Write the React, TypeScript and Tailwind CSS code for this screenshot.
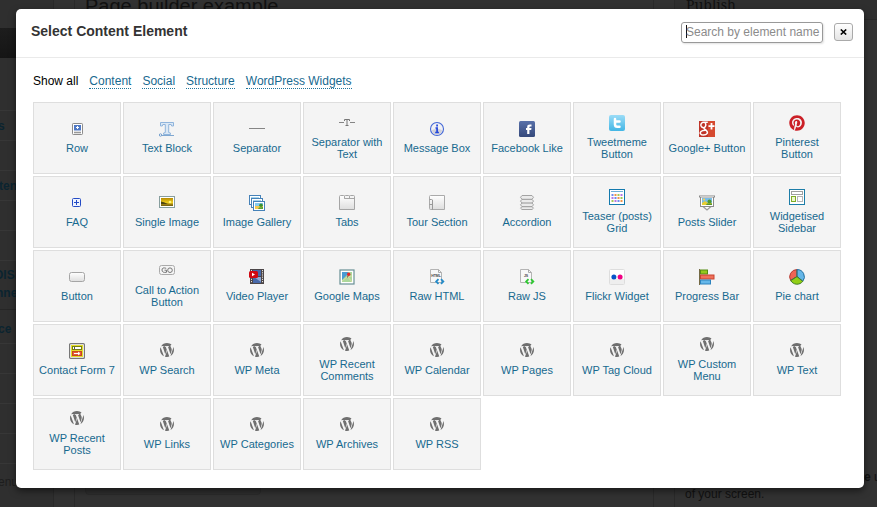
import type { ReactNode } from "react";
import { FaPinterest } from "react-icons/fa";

function Icon({ children }: { children: ReactNode }) {
  return (
    <svg width="16" height="16" viewBox="0 0 16 16" fill="none" className="block">
      {children}
    </svg>
  );
}

function WordPressMark() {
  return (
    <svg width="14" height="14" viewBox="43 43 426 426" fill="#6f6f6f" className="mb-0.5 block">
      <path d="M61.7 169.4l101.5 278C92.2 413 43.3 340.2 43.3 256c0-30.9 6.6-60.1 18.4-86.6zm337.9 75.900c0-26.300-9.400-44.500-17.500-58.700-10.800-17.500-20.900-32.400-20.900-49.900 0-19.600 14.800-37.800 35.700-37.800.9 0 1.800.1 2.800.2-37.900-34.700-88.300-55.900-143.700-55.900-74.300 0-139.700 38.100-177.800 95.900 5 .2 9.700.3 13.700.3 22.200 0 56.700-2.700 56.700-2.700 11.500-.7 12.800 16.200 1.400 17.500 0 0-11.500 1.300-24.300 2l77.500 230.400L249.800 247l-33.100-90.800c-11.500-.7-22.300-2-22.300-2-11.500-.7-10.100-18.200 1.300-17.500 0 0 35.100 2.700 56 2.700 22.200 0 56.700-2.700 56.700-2.700 11.500-.7 12.800 16.200 1.400 17.500 0 0-11.500 1.300-24.300 2l76.900 228.700 21.200-70.900c9-29.400 16-50.500 16-68.700zm-139.900 29.300l-63.800 185.500c19.100 5.600 39.200 8.700 60.100 8.700 24.800 0 48.500-4.300 70.600-12.100-.6-.9-1.100-1.900-1.500-2.900l-65.400-179.200zm183-120.700c.9 6.800 1.400 14 1.400 21.900 0 21.600-4 45.800-16.200 76.200l-65 187.900C426.200 403 468.700 334.500 468.700 256c0-37-9.400-71.800-26-102.100z" />
    </svg>
  );
}

const icons: Record<string, ReactNode> = {
  row: (
    <Icon>
      <rect x="3.5" y="2.5" width="10" height="11" rx="0.8" fill="#fff" stroke="#8b8b8b" />
      <rect x="5" y="4" width="7" height="5.5" fill="#4f78c4" />
      <path d="M7 6.5h3M8.5 5v3" stroke="#fff" />
      <path d="M5 11.5h7" stroke="#999" strokeWidth="1.6" />
    </Icon>
  ),
  text: (
    <Icon>
      <path
        d="M1.5 5V1.500h13V5h-1.800l-.5-1.500H9.700v8l1.800.6v1.400H4.500v-1.400l1.800-.6v-8H3.800L3.300 5z"
        fill="#dbe8f5"
        stroke="#8fb4dc"
      />
      <path d="M3 14.500h12" stroke="#7fa7d0" />
      <circle cx="1.500" cy="14" r="1.200" fill="#fff" stroke="#6f9bcb" />
    </Icon>
  ),
  separator: (
    <Icon>
      <path d="M0 7.500h16" stroke="#858585" />
    </Icon>
  ),
  separatorText: (
    <Icon>
      <path d="M0 7.500h5M11 7.500h5" stroke="#858585" />
      <path d="M5.500 6V4.500h5V6M8 4.500v6M6.500 10.500h3" stroke="#777" />
    </Icon>
  ),
  info: (
    <Icon>
      <circle cx="8" cy="8" r="6.500" fill="#f1f1f4" stroke="#4468d6" strokeWidth="1.100" />
      <path d="M3 9a5 5 0 0 0 10 0Q8 7 3 9z" fill="#d1d1d9" />
      <path d="M8.100 3.500v2M6.500 7h1.600v4.500M6.200 11.500h3.700" stroke="#2146dc" strokeWidth="1.700" />
    </Icon>
  ),
  facebook: (
    <Icon>
      <defs>
        <linearGradient id="fb" x2="0" y2="1">
          <stop stopColor="#5870a9" />
          <stop offset="1" stopColor="#35497b" />
        </linearGradient>
      </defs>
      <rect width="16" height="16" rx="1.500" fill="url(#fb)" />
      <path d="M8.200 13V9H7V7h1.200V5.800C8.200 4.200 9.200 3.500 11 3.500h1.500v2h-1.200c-.6 0-.9.2-.9.800V7h2.100l-.3 2h-1.800v4z" fill="#fff" />
    </Icon>
  ),
  twitter: (
    <Icon>
      <defs>
        <linearGradient id="tw" x2="0" y2="1">
          <stop stopColor="#9bdcf7" />
          <stop offset="1" stopColor="#43b6e5" />
        </linearGradient>
      </defs>
      <rect width="16" height="16" rx="2" fill="url(#tw)" />
      <path d="M6 4v5.500q0 2.300 2.300 2.300H10.500M6 6.500h4.500" stroke="#fff" strokeWidth="2.500" strokeLinecap="round" />
    </Icon>
  ),
  google: (
    <Icon>
      <path d="M0 0h9v16H0z" fill="#bf3428" />
      <path d="M9 0h7v16H9z" fill="#d5492f" />
      <path d="M8.800 1.300H4.800C2.500 1.300 1.700 3 1.900 4.500S3.800 7 5.300 6.500 7.500 3 5.900 1.800M5.300 6.700c-.8 1 .6 1.400 1.700 2.400 3 2.900.6 5-2.500 5-3 0-4-2.100-2.500-3.600C3 9.500 4.600 9.400 6.500 9.300" stroke="#fff" strokeWidth="1.500" />
      <path d="M12.500 2v6.500M9.500 5.200h6" stroke="#fff" strokeWidth="1.800" />
    </Icon>
  ),
  pinterest: <FaPinterest size={16} color="#cb2027" />,
  faq: (
    <Icon>
      <rect x="3.500" y="3.500" width="8" height="8" rx="1" fill="#eef3ff" stroke="#244bc5" />
      <path d="M5 7.500h5M7.500 5v5" stroke="#244bc5" />
    </Icon>
  ),
  image: (
    <Icon>
      <defs>
        <linearGradient id="sunset" x2="0" y2="1">
          <stop stopColor="#b78a00" />
          <stop offset=".6" stopColor="#f0d020" />
          <stop offset=".75" stopColor="#a88a14" />
          <stop offset="1" stopColor="#6b5a12" />
        </linearGradient>
      </defs>
      <rect x=".5" y="1.500" width="15" height="11" fill="#fff" stroke="#879e9e" />
      <path d="M2 3h12v8H2z" fill="url(#sunset)" />
      <path d="M2 6.500l3 .8 4 1.700H2z" fill="#4d4512" />
      <circle cx="11" cy="7" r="1.300" fill="#fff57a" />
    </Icon>
  ),
  gallery: (
    <Icon>
      <rect x=".5" y=".5" width="11" height="9" fill="#fff" stroke="#4682b8" />
      <path d="M2 2h8v1.500H2z" fill="#a4d5ed" />
      <rect x="2.500" y="3.500" width="11" height="9" fill="#fff" stroke="#4682b8" />
      <path d="M4 5h8v1.500H4z" fill="#a4d5ed" />
      <rect x="4.500" y="6.500" width="11" height="9" fill="#fff" stroke="#4682b8" />
      <path d="M6 8h8v4H6z" fill="#83caef" />
      <path d="M6 11h8v3H6z" fill="#f3c950" />
      <path d="M10 12.500l4-.5v2H9z" fill="#57a338" />
      <circle cx="12" cy="10.300" r="1.800" fill="#39912f" />
    </Icon>
  ),
  tabs: (
    <Icon>
      <defs>
        <linearGradient id="gray" x2="0" y2="1">
          <stop stopColor="#fff" />
          <stop offset="1" stopColor="#dedede" />
        </linearGradient>
      </defs>
      <path d="M.500 14.500v-13q0-1 1-1h3q1 0 1 1V3.500h10v11z" fill="url(#gray)" stroke="#a5a5a5" />
      <path d="M5.500 3.500v-2q0-1 1-1h3q1 0 1 1v2M10.500 3.500v-2q0-1 1-1h3q1 0 1 1v3" stroke="#a5a5a5" />
    </Icon>
  ),
  tour: (
    <Icon>
      <defs>
        <linearGradient id="tourFill" x2="0" y2="1">
          <stop stopColor="#fff" />
          <stop offset="1" stopColor="#ddd" />
        </linearGradient>
      </defs>
      <path d="M1.500.500h14v14h-14q-1 0-1-1v-12q0-1 1-1z" fill="url(#tourFill)" stroke="#aaa" />
      <path d="M3.500 5v9.500M.500 4.500h2q1 0 1 1v4h-3M3.500 9.500v5" stroke="#999" />
    </Icon>
  ),
  accordion: (
    <Icon>
      <path d="M3 .500h10l1.500 1.800L13 4.300l1.500 1.800L13 8l1.500 1.800L13 11.700l1.500 1.500L13 14.500H3l-1.500-1.300L3 11.700 1.500 9.800 3 8 1.500 6.100 3 4.300 1.500 2.300z" fill="#ebebeb" stroke="#a3a3a3" />
      <path d="M3 4.300h10M3 8h10M3 11.700h10" stroke="#969696" />
    </Icon>
  ),
  grid: (
    <Icon>
      <rect x=".500" y=".500" width="15" height="15" fill="#fff" stroke="#1379ad" />
      <path d="M2 2.500h12" stroke="#6fb0d8" />
      {[5, 8, 11].map((y, r) =>
        [2, 5, 8, 11].map((x, c) => (
          <rect key={`${x}-${y}`} x={x + 0.5} y={y} width="2" height="2" fill={["#6f8cec", "#f0944a", "#a4c855", "#b977e2"][(r * 3 + c) % 4]} />
        )),
      )}
    </Icon>
  ),
  slider: (
    <Icon>
      <path d="M4 11.500l4 3.500 4-3.500" fill="#fff" stroke="#9b9b9b" strokeWidth="1.300" />
      <rect x="1.500" y="1.500" width="13" height="10" fill="#fff" stroke="#8b8b8b" />
      <path d="M3 3h10v5H3z" fill="#79bde7" />
      <path d="M3 8l3-2 3 2h4v2H3z" fill="#e7ce34" />
      <path d="M8 8.500h5v1.500H7z" fill="#59932d" />
      <circle cx="10.500" cy="6.500" r="2" fill="#4f9931" />
      <circle cx="5" cy="4.500" r="1" fill="#ffd345" />
      <path d="M0 1.500h16" stroke="#8a8a8a" strokeWidth="2" />
      <path d="M1 1.500h14" stroke="#ddd" strokeWidth=".800" />
    </Icon>
  ),
  sidebar: (
    <Icon>
      <rect x=".500" y=".500" width="15" height="15" fill="#fff" stroke="#1c7da8" />
      <rect x="2.500" y="2.500" width="11" height="3" fill="#fff" stroke="#a0a0a0" />
      <rect x="2.500" y="7.500" width="4" height="5" fill="#edf7ce" stroke="#7fac25" />
      <rect x="8.500" y="7.500" width="5" height="5" fill="#fff" stroke="#b5b5b5" />
    </Icon>
  ),
  button: (
    <Icon>
      <defs>
        <linearGradient id="buttonFill" x2="0" y2="1">
          <stop stopColor="#fff" />
          <stop offset="1" stopColor="#dedede" />
        </linearGradient>
      </defs>
      <rect x=".500" y="3.500" width="15" height="9" rx="2" fill="url(#buttonFill)" stroke="#a5a5a5" />
    </Icon>
  ),
  go: (
    <Icon>
      <rect x=".500" y="2.500" width="15" height="9" rx="2" fill="#f4f4f4" stroke="#aaa" />
      <path d="M7.200 5.300Q3 4 3 7t4.500 2.300V7.200H5.500" stroke="#777" />
      <circle cx="11" cy="7.200" r="2.300" stroke="#777" />
    </Icon>
  ),
  video: (
    <Icon>
      <path d="M1 0h14v15H1z" fill="#4c4648" />
      <path d="M4 1h8v6H4zM4 8h8v6H4z" fill="#4869aa" />
      <path d="M5 8h7v5z" fill="#8faad6" />
      <path d="M2.500 1v13M13.500 1v13" stroke="#e6e1dc" strokeDasharray="1.200 1" />
      <rect x="0" y="2" width="9" height="7" rx="1.500" fill="#cf0913" />
      <path d="M3 3.700v3.600l3-1.800z" fill="#fff" />
    </Icon>
  ),
  maps: (
    <Icon>
      <rect x="1" y="1" width="14" height="14" fill="#fff" stroke="#688f94" strokeWidth="1.200" />
      <path d="M3 3h10v10H3z" fill="#acd79b" />
      <path d="M3 3h6v2L6 8l-3 3z" fill="#4a9bd3" />
      <path d="M3 12l5-4 5-1M9 8l4 5" stroke="#e0e0a0" strokeWidth=".800" />
      <path d="M9.500 5.500l-1 3" stroke="#745" />
      <circle cx="9.700" cy="5.300" r="1.700" fill="#e42929" />
    </Icon>
  ),
  html: (
    <Icon>
      <path d="M1.500.500h8l3 3v10h-11z" fill="#f8f8f8" stroke="#b4b4b4" />
      <path d="M9.500.500v3h3" stroke="#aaa" />
      <text x="2.200" y="7.800" fontSize="3.500" fontFamily="Liberation Sans, sans-serif" fontWeight="bold" fill="#444">HTML</text>
      <path d="M9.500 10.200l-2.300 2.300 2.300 2.300M12 10.200l2.300 2.300-2.300 2.300" stroke="#248bc8" strokeWidth="1.800" />
    </Icon>
  ),
  js: (
    <Icon>
      <path d="M1.500.500h8l3 3v10h-11z" fill="#f8f8f8" stroke="#b4b4b4" />
      <path d="M9.500.500v3h3" stroke="#aaa" />
      <text x="4.900" y="8" fontSize="3.500" fontFamily="Liberation Sans, sans-serif" fontWeight="bold" fill="#444">JS</text>
      <path d="M9.500 10.200l-2.300 2.300 2.300 2.300M12 10.200l2.300 2.300-2.300 2.300" stroke="#2ec832" strokeWidth="1.800" />
    </Icon>
  ),
  flickr: (
    <Icon>
      <rect x=".500" y=".500" width="15" height="15" rx="1" fill="#fff" stroke="#ddd" />
      <path d="M1 10h14v5H1z" fill="#eee" />
      <circle cx="4.900" cy="8" r="2.500" fill="#0754c8" />
      <circle cx="11.100" cy="8" r="2.500" fill="#f10083" />
    </Icon>
  ),
  progress: (
    <Icon>
      <rect x="1.500" y="1" width="7" height="4" fill="#94c81d" stroke="#558c12" />
      <rect x="1.500" y="6" width="13.500" height="4" fill="#ef705a" stroke="#c84331" />
      <rect x="1.500" y="11" width="10" height="4" fill="#66b8ea" stroke="#2d83be" />
      <path d="M.500 0v16" stroke="#746a45" />
    </Icon>
  ),
  pie: (
    <Icon>
      <path d="M8 7.500V.600A7.200 7.200 0 0 0 1.700 11.500z" fill="#f06454" stroke="#b53c34" />
      <path d="M8 7.500V.600a7.200 7.200 0 0 1 5.800 11.700z" fill="#65b6e8" stroke="#246f9d" />
      <path d="M8 7.500L1.700 11.500a7.200 7.200 0 0 0 12.100.800z" fill="#92cf15" stroke="#407e22" />
      <path d="M8 7.500V1M8 7.500l5 4.300M8 7.500l-6 3.700" stroke="#46714a" strokeWidth=".700" />
    </Icon>
  ),
  contact: (
    <Icon>
      <rect x=".600" y=".600" width="14.800" height="14.800" rx="1" fill="#fff" stroke="#777" strokeWidth="1.200" />
      <path d="M2 2h12v12H2z" fill="#e4dd29" />
      <rect x="3.500" y="3.500" width="9" height="3" fill="#fff" stroke="#737d12" />
      <path d="M5.500 4v2" stroke="#555" />
      <rect x="3.500" y="8.500" width="9" height="4" fill="#e65b3a" stroke="#c54720" />
      <path d="M5 10.500h5M9 9l2 1.500L9 12" stroke="#fff" />
    </Icon>
  ),
  wp: <WordPressMark />,
};

const elements: [string, string][] = [
  ["Row", "row"], ["Text Block", "text"], ["Separator", "separator"],
  ["Separator with\nText", "separatorText"], ["Message Box", "info"], ["Facebook Like", "facebook"],
  ["Tweetmeme\nButton", "twitter"], ["Google+ Button", "google"], ["Pinterest\nButton", "pinterest"],
  ["FAQ", "faq"], ["Single Image", "image"], ["Image Gallery", "gallery"],
  ["Tabs", "tabs"], ["Tour Section", "tour"], ["Accordion", "accordion"],
  ["Teaser (posts)\nGrid", "grid"], ["Posts Slider", "slider"], ["Widgetised\nSidebar", "sidebar"],
  ["Button", "button"], ["Call to Action\nButton", "go"], ["Video Player", "video"],
  ["Google Maps", "maps"], ["Raw HTML", "html"], ["Raw JS", "js"],
  ["Flickr Widget", "flickr"], ["Progress Bar", "progress"], ["Pie chart", "pie"],
  ["Contact Form 7", "contact"], ["WP Search", "wp"], ["WP Meta", "wp"],
  ["WP Recent\nComments", "wp"], ["WP Calendar", "wp"], ["WP Pages", "wp"],
  ["WP Tag Cloud", "wp"], ["WP Custom\nMenu", "wp"], ["WP Text", "wp"],
  ["WP Recent\nPosts", "wp"], ["WP Links", "wp"], ["WP Categories", "wp"],
  ["WP Archives", "wp"], ["WP RSS", "wp"],
];

function Backdrop() {
  return (
    <div className="flex h-full bg-[#323232] text-[#111]">
      <div className="flex w-[54px] shrink-0 flex-col overflow-hidden border-r border-[#292929] bg-[#2f2f2f] text-[12px] font-bold leading-[18px] text-[#0b2430]">
        <div className="h-7 shrink-0" />
        <div className="h-[30px] shrink-0 bg-gradient-to-b from-[#1d1d1d] to-[#151515]" />
        <div className="h-[53px] shrink-0 border-b border-[#373737]" />
        <div className="h-[30px] shrink-0 border-b border-[#373737] pt-1.5 -indent-[2px]">s</div>
        <div className="h-[30px] shrink-0 border-b border-[#373737]" />
        <div className="h-[30px] shrink-0 border-b border-[#373737] pt-1.5 -indent-px">ten</div>
        <div className="h-[30px] shrink-0 border-b border-[#373737]" />
        <div className="h-[30px] shrink-0 border-b border-[#373737]" />
        <div className="h-[49px] shrink-0 border-b border-[#262626] pt-[5px]">
          <div className="-ml-[6px]">OISI</div>
          <div className="-ml-1">nne</div>
        </div>
        <div className="h-[34px] shrink-0 border-b border-[#373737] pt-[10px] -indent-[2px]">ce</div>
        <div className="h-[30px] shrink-0 border-b border-[#373737]" />
        <div className="h-[30px] shrink-0 border-b border-[#373737]" />
        <div className="h-[30px] shrink-0 border-b border-[#373737]" />
        <div className="h-[30px] shrink-0 border-b border-[#373737]" />
        <div className="pt-[9px] font-normal text-[#1d1d1d] -indent-[2px]">enu</div>
      </div>
      <div className="ml-5 flex w-[580px] shrink-0 flex-col justify-between border-x border-[#2a2a2a]">
        <div className="-mt-1.5 ml-[10px] text-[20px] leading-6">Page builder example</div>
        <div className="mb-3 ml-[10px] h-5 w-[176px] rounded border border-[#2b2b2b] bg-[#2f2f2f]" />
      </div>
      <div className="ml-5 flex min-w-0 flex-1 flex-col justify-between border-l border-[#2a2a2a]">
        <div className="h-5 border-b border-[#292929] bg-[#2f2f2f] pl-[11px] font-['Noto_Serif','DejaVu_Serif','Liberation_Serif',serif] text-[14px] leading-[9px]">Publish</div>
        <div className="pb-1 pl-2.5 text-[12px] leading-[17px]">
          <div className="whitespace-nowrap pl-[179px] text-[#111]"><b>e</b> u</div>
          <div>of your screen.</div>
        </div>
      </div>
    </div>
  );
}

export default function App() {
  return (
    <div className="relative h-[507px] w-[877px] overflow-hidden font-['Liberation_Sans',Arial,sans-serif]">
      <Backdrop />
      <main className="absolute left-4 top-[9px] h-[479px] w-[848px] rounded-[5px] bg-white shadow-[0_3px_7px_rgba(0,0,0,.5)]">
        <header className="flex h-[49px] items-center border-b border-[#eaeaea] pl-[15px] pr-[11px]">
          <h1 className="mb-[5px] flex-1 text-[14px] font-bold leading-5 text-[#333]">Select Content Element</h1>
          <div className="mb-[2px] mr-[11px] flex h-[21px] w-[142px] items-center rounded-[3px] border border-[#999] pb-px pl-1 text-[12px] whitespace-nowrap text-[#8b8b8b] shadow-[1px_1px_2px_rgba(0,0,0,.12)]">
            <span className="-mr-px h-[13px] w-px shrink-0 bg-[#111]" />
            Search by element name
          </div>
          <button className="mb-[2px] flex h-[18px] w-[19px] items-center justify-center rounded-[3px] border border-[#aaa] bg-gradient-to-b from-white to-[#e4e4e4]" aria-label="Close">
            <svg width="7" height="6" viewBox="0 0 7 6"><path d="M.800.500l5.400 5M6.200.500L.800 5.500" stroke="#000" strokeWidth="1.600" /></svg>
          </button>
        </header>
        <nav className="ml-[17px] mt-[15px] flex h-4 text-[12px] leading-4 text-[#17698f]">
          <span className="mr-[11px] text-black">Show all</span>
          {["Content", "Social", "Structure", "WordPress Widgets"].map((name) => (
            <a key={name} className="mr-[11px] h-4 border-b border-dotted border-[#21759b]">{name}</a>
          ))}
        </nav>
        <div className="ml-[17px] mt-[13px] grid w-[808px] grid-cols-9 gap-0.5">
          {elements.map(([label, icon]) => (
            <div key={label} className="flex h-[72px] flex-col items-center justify-center border border-[#dedede] bg-[#f4f4f4] pb-px">
              {icons[icon]}
              <span className="mt-[5px] whitespace-pre-line text-center text-[11px] leading-3 text-[#17698f]">{label}</span>
            </div>
          ))}
        </div>
      </main>
    </div>
  );
}
